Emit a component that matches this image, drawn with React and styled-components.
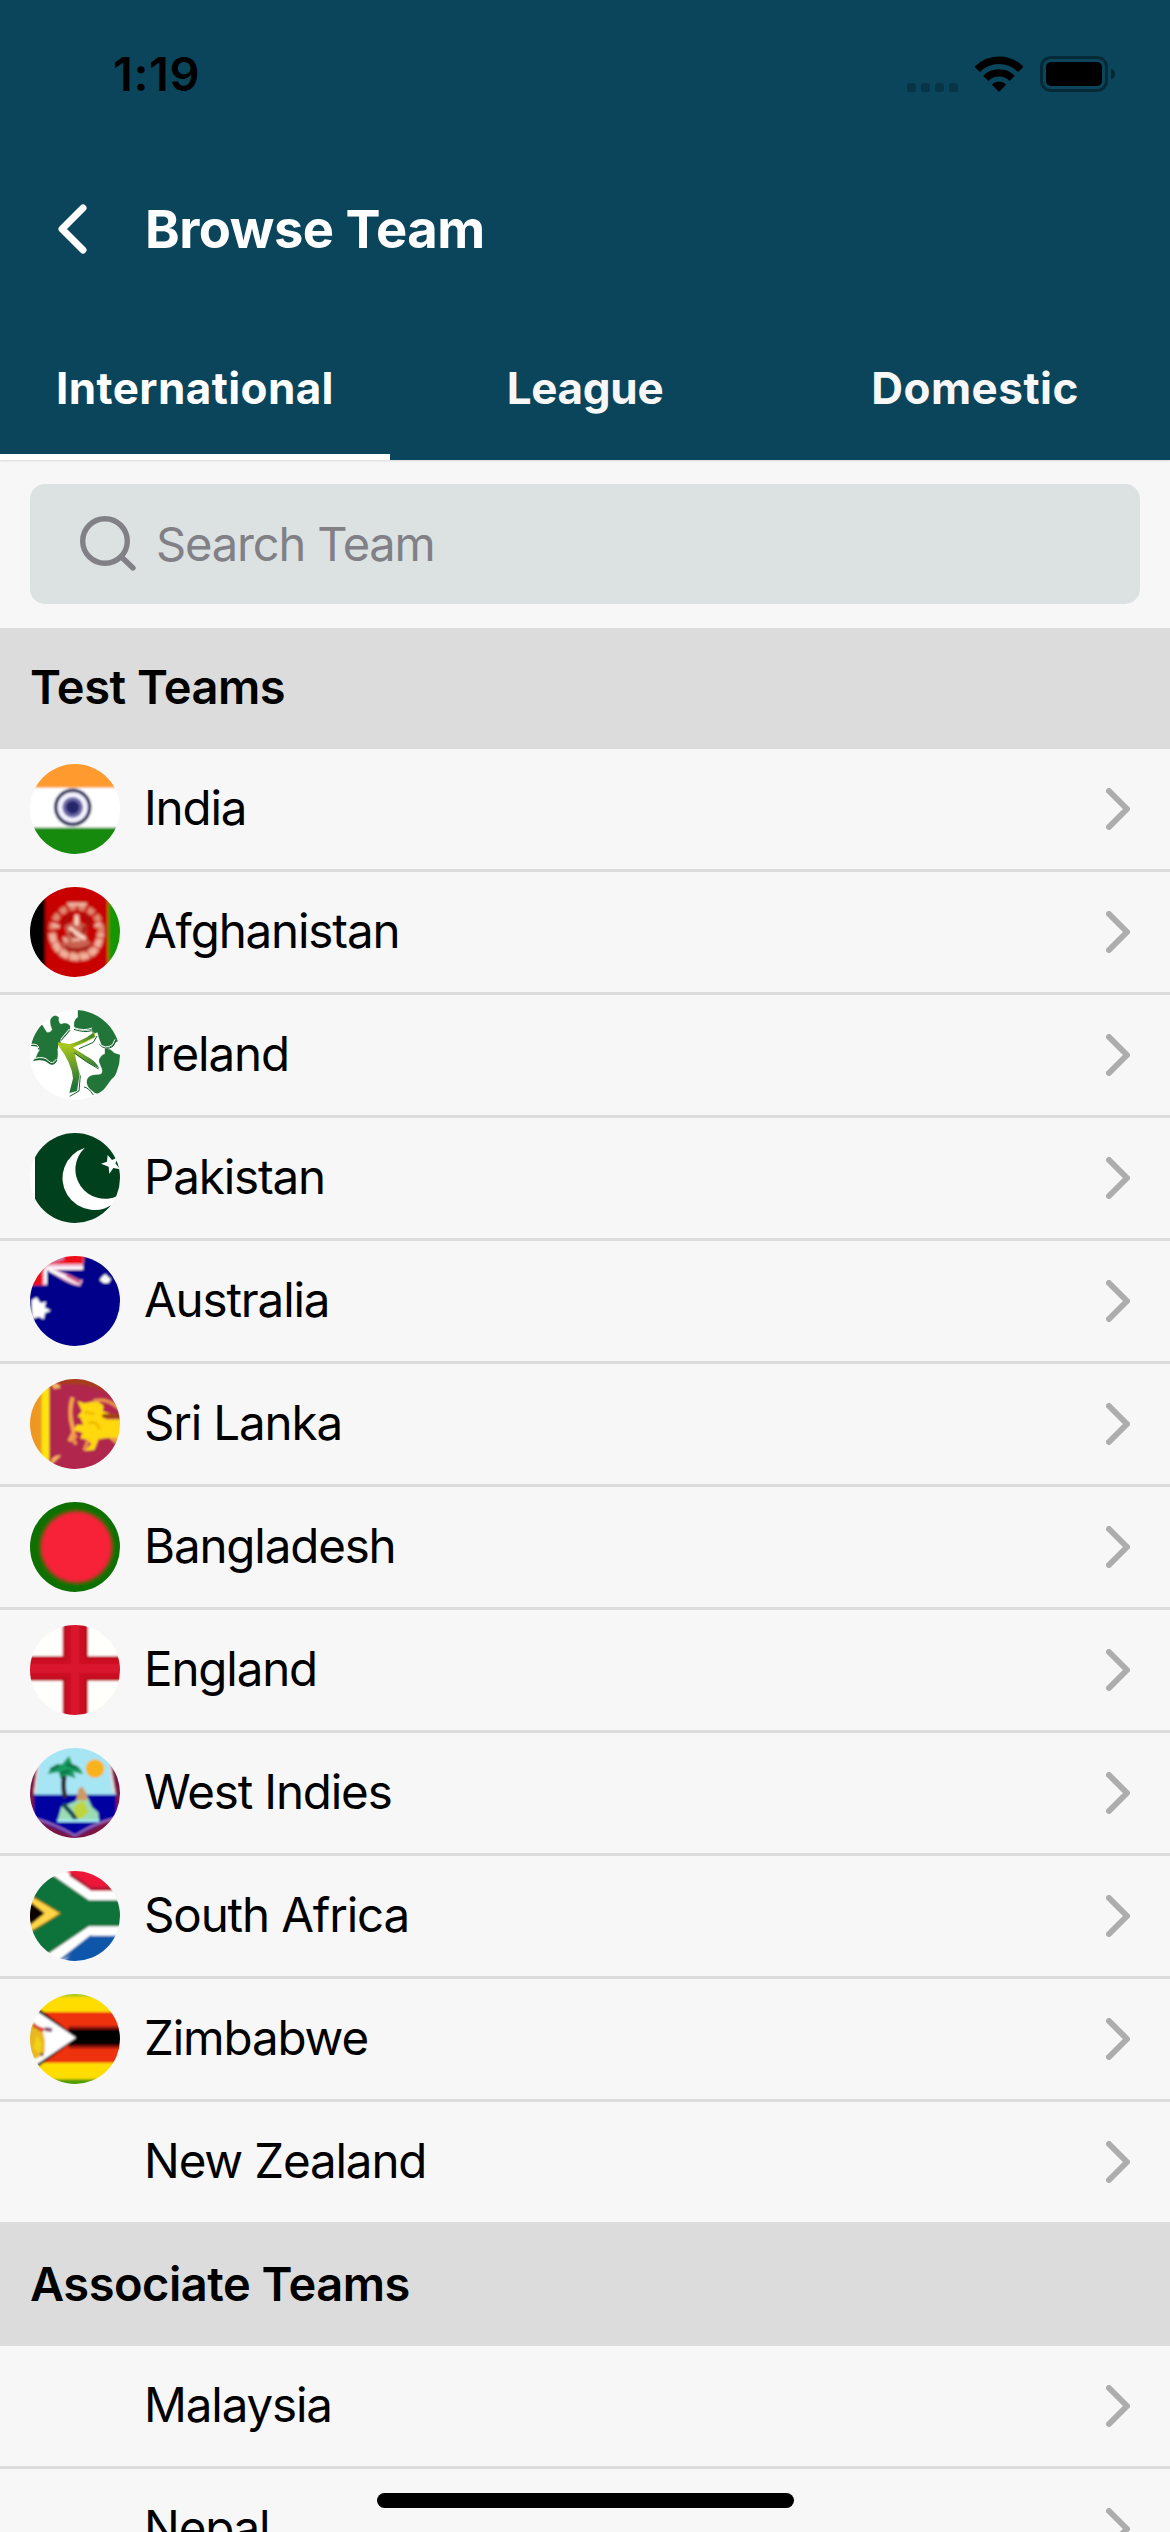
import React from "react";
import styled, { createGlobalStyle } from "styled-components";

const GlobalStyle = createGlobalStyle`
  * { box-sizing: border-box; }
  html, body { margin: 0; padding: 0; background: #f7f7f7; }
  body { font-family: Inter, "Liberation Sans", sans-serif; color: #000; }
  h1, h2, ul { margin: 0; padding: 0; }
`;

const Screen = styled.div`
  position: relative;
  width: 1170px;
  height: 2532px;
  overflow: hidden;
  display: flex;
  flex-direction: column;
  background: #f7f7f7;
`;

const Header = styled.header`
  flex: none;
  height: 460px;
  display: flex;
  flex-direction: column;
  background: #0a455b;
  color: #fff;
  box-shadow: 0 1px 2px rgba(0, 0, 0, 0.12);
`;

const StatusBar = styled.div`
  height: 148px;
  display: flex;
  align-items: center;
  padding: 0 55px 0 113px;
  color: #000;
`;

const Clock = styled.span`
  flex: 1;
  font-size: 47px;
  font-weight: 600;
  line-height: 56px;
  letter-spacing: 0.6px;
`;

const StatusIcons = styled.div`
  display: flex;
  align-items: center;
`;

const NavBar = styled.div`
  height: 162px;
  display: flex;
  align-items: center;
  padding-left: 58px;
  gap: 57px;
`;

const Title = styled.h1`
  font-size: 52.5px;
  font-weight: 700;
  line-height: 64px;
  letter-spacing: -0.5px;
`;

const Tabs = styled.nav`
  flex: 1;
  display: grid;
  grid-template-columns: repeat(3, 1fr);
`;

const Tab = styled.button`
  display: flex;
  align-items: center;
  justify-content: center;
  padding: 12px 0 0;
  border: 0;
  border-bottom: 6px solid ${(p) => (p.$active ? "#fff" : "transparent")};
  background: none;
  color: ${(p) => (p.$active ? "#fff" : "#f7f7f7")};
  font: 650 44px/54px Inter, "Liberation Sans", sans-serif;
  letter-spacing: ${(p) => p.$tracking}px;
`;

const SearchArea = styled.div`
  flex: none;
  padding: 24px 30px;
`;

const SearchBox = styled.div`
  height: 120px;
  display: flex;
  align-items: center;
  gap: 20px;
  padding-left: 50px;
  border-radius: 15px;
  background: #dce2e2;
  color: #818086;
`;

const Placeholder = styled.span`
  font-size: 47px;
  line-height: 58px;
  letter-spacing: -1.15px;
`;

const SectionTitle = styled.h2`
  flex: none;
  height: 121px;
  display: flex;
  align-items: center;
  padding: 0 30px 4px;
  background: #dcdcdc;
  font-size: 47px;
  font-weight: 600;
  line-height: 58px;
  letter-spacing: -0.5px;
`;

const TeamList = styled.ul`
  flex: none;
  list-style: none;
`;

const TeamRow = styled.li`
  height: 123px;
  display: flex;
  align-items: center;
  padding: 0 40px 0 30px;
  border-bottom: 3px solid #dcdcdc;
`;

const Avatar = styled.div`
  width: 90px;
  height: 90px;
  margin-right: 24px;
  border-radius: 50%;
  overflow: hidden;

  svg { display: block; }
`;

const TeamName = styled.span`
  flex: 1;
  padding-bottom: 2px;
  font-size: 47.5px;
  line-height: 58px;
  letter-spacing: -1.15px;
`;

const HomeIndicator = styled.div`
  position: absolute;
  left: 377px;
  bottom: 24px;
  width: 417px;
  height: 15px;
  border-radius: 8px;
  background: #000;
`;

const Signal = () => (
  <svg width="116" height="36" viewBox="0 0 116 36">
    {[0, 14, 28, 42].map((x) => (
      <rect key={x} x={x} y="27" width="9" height="9" rx="2.6" fill="#000" opacity="0.22" />
    ))}
    <g transform="translate(68 0)" fill="none" stroke="#000">
      <path d="M2.2 13.4A30.5 30.5 0 0 1 45.8 13.4" strokeWidth="7.6" />
      <path d="M10.8 22.3A18.8 18.8 0 0 1 37.2 22.3" strokeWidth="7.4" />
      <path d="M24 36L16.8 28.4A10.5 10.5 0 0 1 31.2 28.4Z" fill="#000" stroke="none" />
    </g>
  </svg>
);

const Battery = () => (
  <svg width="92" height="36" viewBox="0 0 92 36">
    <rect x="18.5" y="1.5" width="65" height="33" rx="9.5" fill="none" stroke="#000" strokeWidth="3" opacity="0.4" />
    <rect x="23" y="6" width="56" height="24" rx="5" />
    <path d="M88 12.5Q92 14 92 18Q92 22 88 23.5Z" opacity="0.45" />
  </svg>
);

const BackIcon = () => (
  <svg width="30" height="50" viewBox="0 0 30 50" fill="none" stroke="#fff" strokeWidth="7" strokeLinecap="round" strokeLinejoin="round">
    <path d="M25 4L4 25L25 46" />
  </svg>
);

const SearchIcon = () => (
  <svg width="56" height="56" viewBox="0 0 56 56" fill="none" stroke="currentColor" strokeWidth="5.4" strokeLinecap="round">
    <circle cx="25" cy="25" r="22.3" />
    <path d="M42 41.5L53 52" />
  </svg>
);

const Chevron = () => (
  <svg width="24" height="42" viewBox="0 0 24 42" fill="none" stroke="#adadad" strokeWidth="6" strokeLinecap="round" strokeLinejoin="round">
    <path d="M3 3L21 21L3 39" />
  </svg>
);

const FlagArt = ({ id, soft = 0, children }) => (
  <svg width="90" height="90" viewBox="0 0 270 270">
    <filter id={id} x="-10%" y="-10%" width="120%" height="120%">
      <feGaussianBlur stdDeviation={soft} />
    </filter>
    <g filter={soft ? `url(#${id})` : undefined}>{children}</g>
  </svg>
);

const India = () => (
  <FlagArt id="india" soft={3}>
    <rect x="-20" y="-20" width="310" height="310" fill="#fff" />
    <rect x="-20" y="-20" width="310" height="91" fill="#ff9a2e" />
    <rect x="-20" y="191" width="310" height="100" fill="#138a08" />
    <circle cx="128" cy="130" r="51" fill="#f4f2ff" stroke="#373763" strokeWidth="11" />
    <circle cx="128" cy="130" r="31" fill="#6c69a5" />
    <circle cx="128" cy="130" r="20" fill="#28266d" />
  </FlagArt>
);

const Afghanistan = () => (
  <FlagArt id="afghanistan" soft={4}>
    <rect x="-20" y="-20" width="310" height="310" fill="#c80000" />
    <rect x="-20" y="-20" width="66" height="310" fill="#050000" />
    <rect x="234" y="-20" width="60" height="310" fill="#149600" />
    <circle cx="140" cy="132" r="73" fill="none" stroke="#e08a72" strokeWidth="19" strokeDasharray="20 9" />
    <path d="M66 140Q76 209 140 211T212 140" fill="none" stroke="#f0b09a" strokeWidth="20" strokeDasharray="26 5" />
    <path d="M140 82L152 108L170 116L166 150L184 170L166 192H112L92 172L112 150L104 116L126 108Z" fill="#c9604f" />
    <path d="M140 84V114M118 122L138 138L166 156" stroke="#ffdfca" strokeWidth="11" fill="none" />
    <path d="M100 116Q108 88 126 82M156 82Q178 94 180 120M104 180Q138 200 180 178M122 134L142 164M164 118L158 140" stroke="#a00a0a" strokeWidth="10" fill="none" />
    <path d="M112 52H170M68 112L88 120M194 118L212 108M126 158H150M100 152L112 164" stroke="#f3c0aa" strokeWidth="9" fill="none" />
  </FlagArt>
);

const Ireland = () => (
  <FlagArt id="ireland" soft={0.8}>
    <defs>
      <linearGradient id="stem" gradientUnits="userSpaceOnUse" x1="125" y1="105" x2="145" y2="225">
        <stop offset="0" stopColor="#a9c61c" />
        <stop offset="1" stopColor="#237438" />
      </linearGradient>
      <linearGradient id="stemRight" x1="0" y1="0" x2="1" y2="0">
        <stop offset="0" stopColor="#b5cb1b" />
        <stop offset="1" stopColor="#237438" />
      </linearGradient>
    </defs>
    <rect width="270" height="270" fill="#fff" />
    <g fill="#237438" stroke="#237438" strokeLinejoin="round">
      <path d="M3 107Q10 62 35 43L50 67Q60 70 67 59Q56 32 65 23Q74 12 86 22Q84 39 93 43Q111 35 120 48Q122 60 108 72L90 92L94 105L82 117Q86 142 77 157Q65 170 52 156Q35 145 10 153Q20 142 24 128Q36 116 20 109Z" />
      <path d="M144 0H180L252 52L270 92Q252 94 251 106Q232 120 216 107L205 78Q190 70 184 58Q162 65 134 54Q128 32 144 22Z" />
      <path d="M225 116Q243 116 252 129L270 135V184L244 208L221 239Q204 261 187 242Q174 235 171 220Q167 193 206 194Q221 192 216 176L207 154Q209 137 225 132Z" />
    </g>
    <g fill="none" stroke="#176031" strokeWidth="3">
      <path d="M5 106Q28 104 26 119M14 149Q45 143 54 157Q72 171 81 150M93 92L120 61M132 58Q165 69 184 62Q193 74 205 79M207 102Q227 124 249 109L259 91M162 231Q176 233 190 255" />
    </g>
    <g fill="none" stroke="#fff" strokeWidth="3">
      <path d="M2 103Q25 100 26 114M14 145Q44 138 55 152Q68 165 78 148M92 88L118 57M131 53Q163 64 186 54M204 98Q226 120 247 104L255 88" />
    </g>
    <path d="M84 100Q108 98 126 105L202 67L206 79Q175 99 142 112L207 145V179Q158 150 126 123Q145 174 149 204L143 246L117 252Q130 211 126 188Q112 149 84 113Z" fill="#fff" />
    <path d="M84 97Q107 100 121 103Q166 92 192 66L197 80Q168 98 130 112Q138 152 149 192L141 243L118 249L129 205Q126 160 84 105Z" fill="url(#stem)" />
    <path d="M112 104Q160 92 190 68L194 80Q160 98 126 111L168 138Q194 150 208 174Q168 160 119 119Z" fill="url(#stemRight)" />
    <path d="M151 196L147 243L119 259M147 116L190 97L201 78M132 128Q169 157 206 177" fill="none" stroke="#1f6030" strokeWidth="3" />
  </FlagArt>
);

const Pakistan = () => (
  <FlagArt id="pakistan" soft={0.7}>
    <rect x="-10" y="-10" width="290" height="290" fill="#fff" />
    <rect x="15" y="-10" width="270" height="290" fill="#00401a" />
    <path d="M165 44A95.7 95.7 0 1 0 262 202Q268 192 264 188A88.2 88.2 0 0 1 165 44Z" fill="#fff" />
    <path d="M213 92L231 86L233 66L246 81L266 72L256 91L270 109L250 105L238 122L236 101Z" fill="#fff" />
  </FlagArt>
);

const Australia = () => (
  <FlagArt id="australia" soft={3}>
    <rect x="-20" y="-20" width="310" height="310" fill="#00008b" />
    <path d="M-10 -10H164L158 42H80L158 73L150 90Q126 88 90 66L51 43V88H-10Z" fill="#eeb5d1" />
    <path d="M-10 -10H164L158 24H52L38 48V88H-10Z" fill="#ee1018" />
    <path d="M84 42H166V68L150 72Z" fill="#00008b" />
    <path d="M46 36H160M47 40V82M58 42L146 82" stroke="#fff" strokeWidth="8" />
    <path d="M110 57L150 79" stroke="#d05a85" strokeWidth="11" />
    <path d="M68 17L102 7" stroke="#c48ac8" strokeWidth="7" />
    <path d="M20 124L31 141L48 137L44 154L62 164L45 171L41 190L27 182L7 188L5 133Z" fill="#fff" />
    <path d="M226 54L234 62L243 70L235 81L221 81L209 72L216 62Z" fill="#fff" />
  </FlagArt>
);

const SriLanka = () => (
  <FlagArt id="srilanka" soft={3.2}>
    <rect x="-20" y="-20" width="310" height="310" fill="#b0264d" />
    <rect x="-20" y="-20" width="54" height="310" fill="#ee9824" />
    <rect x="34" y="-20" width="24" height="310" fill="#ffe511" />
    <path d="M60 -10H280V65Q190 5 60 18Z" fill="#a83a1e" />
    <path d="M62 12Q92 12 91 27L72 30ZM61 260L94 229Q76 226 65 241Z" fill="#f7b65d" />
    <path d="M128 55Q118 88 123 123L131 160L118 187" fill="none" stroke="#f5a24e" strokeWidth="12" />
    <path d="M142 66L164 73L200 65L221 80L218 96L241 105L225 121H280V163L256 193L238 176L206 181L193 213L164 216L184 195L172 183L150 178L158 162L130 153L141 137H160L151 116L143 112L156 97Z" fill="#ffd80b" />
    <path d="M190 66Q224 57 252 77T280 100M140 168Q122 185 140 195M174 184Q168 204 162 214M246 180L265 184" fill="none" stroke="#ee934a" strokeWidth="10" />
    <path d="M217 111L275 110" stroke="#a04411" strokeWidth="12" />
    <path d="M164 99L193 105M175 133Q201 123 208 151" fill="none" stroke="#efb900" strokeWidth="8" />
  </FlagArt>
);

const Bangladesh = () => (
  <FlagArt id="bangladesh" soft={5}>
    <rect x="-30" y="-30" width="330" height="330" fill="#087006" />
    <circle cx="139" cy="135" r="111" fill="#69400c" />
    <circle cx="139" cy="135" r="104" fill="#f72039" />
  </FlagArt>
);

const England = () => (
  <FlagArt id="england" soft={3.5}>
    <rect x="-20" y="-20" width="310" height="310" fill="#fffffc" />
    <path d="M98 -20H174V94H290V167H174V290H98V167H-20V94H98Z" fill="#cc1024" />
    <path d="M104 -20V98H-20M290 98H168V-20M-20 162H104V290M168 290V162H290" fill="none" stroke="#b8081c" strokeWidth="7" />
    <path d="M135 -20V290M-20 130H290" stroke="#d9162d" strokeWidth="26" />
  </FlagArt>
);

const WestIndies = () => (
  <FlagArt id="westindies" soft={3.6}>
    <rect x="-20" y="-20" width="310" height="310" fill="#a6e5f4" />
    <path d="M-20 140H290V290H-20Z" fill="#0000a0" />
    <path d="M-20 40H27L12 140V205L48 229L135 266L218 225L258 204V140L240 40H290V290H-20Z" fill="#7b1545" />
    <path d="M25 50L14 135M240 50L251 135" stroke="#f6d7d5" strokeWidth="6" />
    <path d="M15 212Q70 226 135 263Q188 228 252 211" fill="none" stroke="#ad75c1" strokeWidth="5" />
    <circle cx="195" cy="62" r="28" fill="#f8b21d" />
    <path d="M53 78Q69 44 96 49L117 24L127 48Q155 56 158 79L130 71L137 91L112 83L92 93L86 72Z" fill="#159b61" />
    <path d="M61 65L86 52M110 48L142 60M92 76L119 69" stroke="#087547" strokeWidth="9" />
    <path d="M103 84Q97 119 106 150" fill="none" stroke="#322b3a" strokeWidth="14" />
    <path d="M83 217L94 177L137 159L146 140H169L186 177L205 194L207 219Z" fill="#9bdcb4" />
    <path d="M145 124L156 115L169 135L172 157H139Z" fill="#ce9a64" />
    <path d="M130 177L158 157L176 190L157 211H136Z" fill="#bfd53e" />
    <path d="M99 168L127 199L138 216" stroke="#194a52" strokeWidth="13" fill="none" />
    <path d="M82 218H207" stroke="#a2eaf0" strokeWidth="9" />
  </FlagArt>
);

const SouthAfrica = () => (
  <FlagArt id="southafrica" soft={2.8}>
    <rect x="-20" y="-20" width="310" height="310" fill="#fff" />
    <path d="M94 -12H290V60H184Z" fill="#ed1539" />
    <path d="M120 10L183 53H260" fill="none" stroke="#b51534" strokeWidth="10" />
    <path d="M-30 -55L72 15L177 88H290V166H177L57 247L-30 300Z" fill="#08733b" />
    <path d="M92 280L181 194H290V290H92Z" fill="#0757aa" />
    <path d="M70 280L181 193L195 199L110 260Z" fill="#0757aa" />
    <path d="M-10 68L93 127L-10 187Z" fill="#ffd446" />
    <path d="M-10 84L44 127L-10 170Z" fill="#080400" />
    <path d="M9 77L91 127L9 180" fill="none" stroke="#856509" strokeWidth="3" />
  </FlagArt>
);

const Zimbabwe = () => (
  <FlagArt id="zimbabwe" soft={3}>
    <rect x="-20" y="-20" width="310" height="310" fill="#ffdd00" />
    <rect x="-20" y="-20" width="310" height="28" fill="#a6c91b" />
    <rect x="-20" y="256" width="310" height="40" fill="#4e9c00" />
    <rect x="-20" y="54" width="310" height="152" fill="#ee310b" />
    <path d="M115 97H290V163H115Z" fill="#8f1707" />
    <path d="M115 106H290V154H115Z" fill="#000" />
    <path d="M-10 16L142 131L-10 244Z" fill="#0f0904" />
    <path d="M-10 31L138 131L-10 232Z" fill="#fff" />
    <path d="M-10 78L18 96L38 111L45 140L44 174L28 190L-10 204Z" fill="#e9b720" />
    <path d="M9 84Q27 101 48 103L36 115Q25 105 9 99" fill="#d4382a" />
    <path d="M45 105L66 109" stroke="#855075" strokeWidth="12" />
    <path d="M20 124L36 150L29 177L10 163" fill="#f2d417" />
    <path d="M32 180L40 183" stroke="#674129" strokeWidth="10" />
  </FlagArt>
);

const testTeams = [
  { name: "India", Flag: India },
  { name: "Afghanistan", Flag: Afghanistan },
  { name: "Ireland", Flag: Ireland },
  { name: "Pakistan", Flag: Pakistan },
  { name: "Australia", Flag: Australia },
  { name: "Sri Lanka", Flag: SriLanka },
  { name: "Bangladesh", Flag: Bangladesh },
  { name: "England", Flag: England },
  { name: "West Indies", Flag: WestIndies },
  { name: "South Africa", Flag: SouthAfrica },
  { name: "Zimbabwe", Flag: Zimbabwe },
  { name: "New Zealand" },
];

const associateTeams = [{ name: "Malaysia" }, { name: "Nepal" }];

const Teams = ({ teams }) => (
  <TeamList>
    {teams.map(({ name, Flag }) => (
      <TeamRow key={name}>
        <Avatar>{Flag && <Flag />}</Avatar>
        <TeamName>{name}</TeamName>
        <Chevron />
      </TeamRow>
    ))}
  </TeamList>
);

export default function App() {
  return (
    <>
      <GlobalStyle />
      <Screen>
        <Header>
          <StatusBar>
            <Clock>1:19</Clock>
            <StatusIcons>
              <Signal />
              <Battery />
            </StatusIcons>
          </StatusBar>
          <NavBar>
            <BackIcon />
            <Title>Browse Team</Title>
          </NavBar>
          <Tabs>
            <Tab $active $tracking={0.4}>International</Tab>
            <Tab $tracking={-0.3}>League</Tab>
            <Tab $tracking={0.5}>Domestic</Tab>
          </Tabs>
        </Header>
        <SearchArea>
          <SearchBox>
            <SearchIcon />
            <Placeholder>Search Team</Placeholder>
          </SearchBox>
        </SearchArea>
        <SectionTitle>Test Teams</SectionTitle>
        <Teams teams={testTeams} />
        <SectionTitle>Associate Teams</SectionTitle>
        <Teams teams={associateTeams} />
        <HomeIndicator />
      </Screen>
    </>
  );
}
